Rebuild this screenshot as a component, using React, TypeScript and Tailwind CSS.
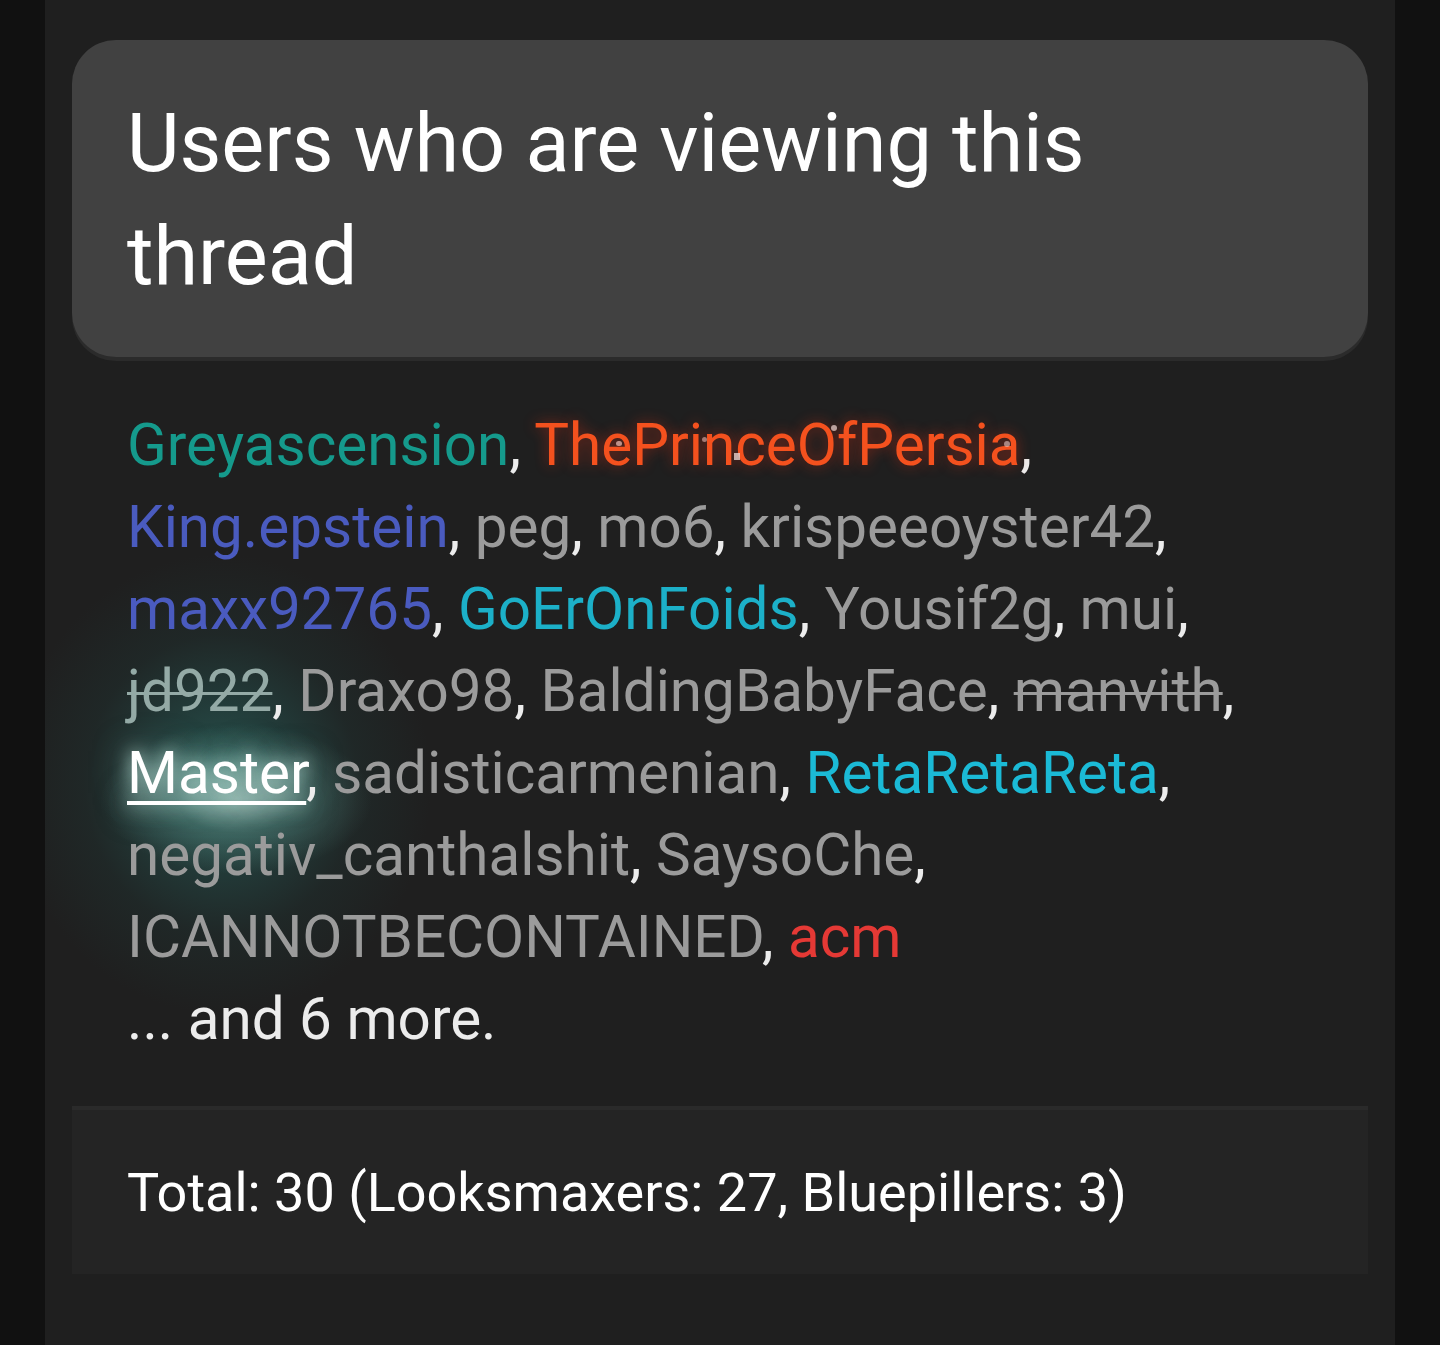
import React from "react";

const Comma = () => <span className="text-[#ececec]">, </span>;

export default function App() {
  const font = { fontFamily: "Roboto, 'Noto Sans', sans-serif" };
  return (
    <div className="min-h-[1345px] w-[1440px] bg-[#111111]" style={font}>
      <div className="mx-[45px] min-h-[1345px] overflow-hidden bg-[#1f1f1f] px-[27px] pt-[40px]">
        {/* header card */}
        <div className="rounded-[44px] bg-[#414141] px-[55px] pt-[47px] pb-[44px] shadow-[0_4px_0_#2b2b2b]">
          <h2 className="text-[81px] leading-[113px] font-normal text-white">
            Users who are viewing this
            <br />
            thread
          </h2>
        </div>

        {/* names */}
        <div className="relative mt-[47px] px-[55px]">
          <div
            className="pointer-events-none absolute left-[-27px] top-[150px] h-[460px] w-[420px]"
            style={{
              background:
                "radial-gradient(ellipse 50% 50% at 42% 50%, rgba(45,110,102,0.7) 0%, rgba(38,88,84,0.5) 35%, rgba(33,62,60,0.28) 65%, rgba(31,31,31,0) 100%)",
            }}
          />
          <div
            className="pointer-events-none absolute left-[30px] top-[320px] h-[150px] w-[270px]"
            style={{
              background:
                "radial-gradient(ellipse 50% 50% at 50% 50%, rgba(215,240,232,0.5) 0%, rgba(120,180,170,0.28) 45%, rgba(60,110,105,0) 100%)",
            }}
          />
          <p className="relative text-[58.4px] leading-[82px] text-[#9b9b9b]">
            <span className="text-[#159a8c]">Greyascension</span>
            <Comma />
            <span className="relative text-[#f4511e] [text-shadow:0_0_14px_rgba(255,50,20,0.45)]">
              ThePrinceOfPersia
              <span className="absolute left-[82px] top-[30px] h-[5px] w-[6px] rounded-full bg-[#f0c0b8] opacity-70" />
              <span className="absolute left-[200px] top-[42px] h-[7px] w-[6px] bg-[#e8d0cc] opacity-80" />
              <span className="absolute left-[297px] top-[14px] h-[6px] w-[6px] rounded-full bg-[#f4d8d4] opacity-70" />
              <span className="absolute left-[168px] top-[26px] h-[5px] w-[5px] rounded-full bg-[#e8b8b0] opacity-60" />
              <span className="absolute left-[470px] top-[30px] h-[6px] w-[6px] rounded-full bg-[#e8c8c4] opacity-60" />
            </span>
            <Comma />
            <br />
            <span className="text-[#4a5bbf]">King.epstein</span>
            <Comma />
            peg
            <Comma />
            mo6
            <Comma />
            krispeeoyster42
            <span className="text-[#ececec]">,</span>
            <br />
            <span className="text-[#4a5bbf]">maxx92765</span>
            <Comma />
            <span className="text-[#1cb0c8]">GoErOnFoids</span>
            <Comma />
            Yousif2g
            <Comma />
            mui
            <span className="text-[#ececec]">,</span>
            <br />
            <span className="text-[#94aaa6] line-through decoration-[3px]">jd922</span>
            <Comma />
            Draxo98
            <Comma />
            BaldingBabyFace
            <Comma />
            <span className="line-through decoration-[3px]">manvith</span>
            <span className="text-[#ececec]">,</span>
            <br />
            <span className="text-white underline decoration-[4px] underline-offset-[8px] [text-shadow:0_0_18px_rgba(220,255,245,0.8),0_0_36px_rgba(150,210,200,0.5)]">
              Master
            </span>
            <Comma />
            sadisticarmenian
            <Comma />
            <span className="text-[#1bbad6]">RetaRetaReta</span>
            <span className="text-[#ececec]">,</span>
            <br />
            negativ_canthalshit
            <Comma />
            SaysoChe
            <span className="text-[#ececec]">,</span>
            <br />
            ICANNOTBECONTAINED
            <Comma />
            <span className="text-[#e53935]">acm</span>
            <br />
            <span className="text-[#ececec]">... and 6 more.</span>
          </p>
        </div>

        {/* footer */}
        <div className="mt-[46px] border-t-[4px] border-[#2a2a2a] bg-[#242424] px-[55px] pt-[52px] pb-[50px]">
          <p className="text-[54px] leading-[62px] text-white">
            Total: 30 (Looksmaxers: 27, Bluepillers: 3)
          </p>
        </div>
      </div>
    </div>
  );
}
